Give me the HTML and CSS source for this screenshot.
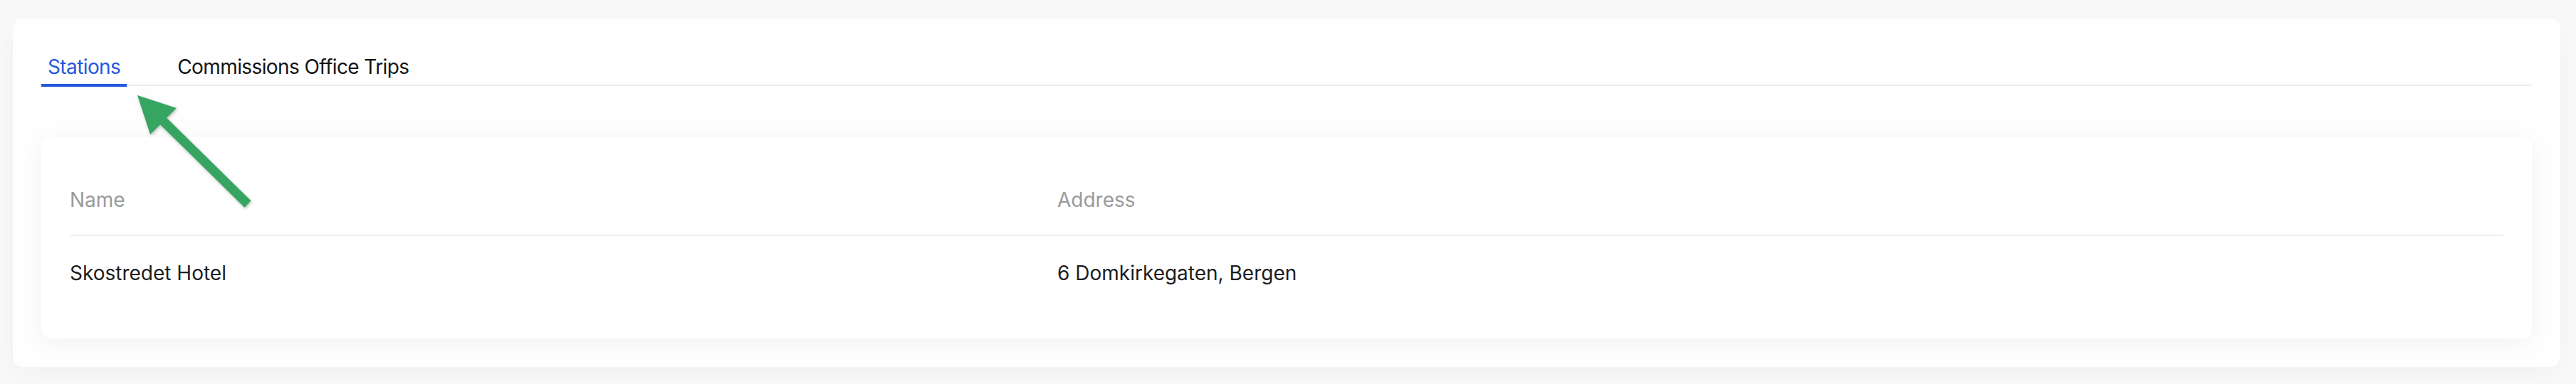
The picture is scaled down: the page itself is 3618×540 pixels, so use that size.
FILE: index.html
```html
<!DOCTYPE html>
<html lang="en">
<head>
<meta charset="utf-8">
<title>Stations</title>
<link rel="stylesheet" href="styles.css">
</head>
<body>
<div class="page">
  <section class="panel">
    <nav class="tabs">
      <div class="tab active">Stations</div>
      <div class="tab">Commissions Office Trips</div>
    </nav>
    <div class="card">
      <div class="table">
        <div class="row head">
          <div class="cell">Name</div>
          <div class="cell">Address</div>
        </div>
        <div class="row body-row">
          <div class="cell">Skostredet Hotel</div>
          <div class="cell">6 Domkirkegaten, Bergen</div>
        </div>
      </div>
    </div>
  </section>
  <svg class="arrow" width="420" height="330" viewBox="0 0 420 330" aria-hidden="true">
    <polygon points="193,134 248,152 234,165.8 352.5,282.3 343.5,291.7 225,175.2 211,189" fill="#36a561"/>
  </svg>
</div>
</body>
</html>
```
FILE: styles.css
```css
html, body {
  margin: 0;
  padding: 0;
}
body {
  background: #f9f9f9;
  font-family: Inter, "Noto Sans", "Liberation Sans", sans-serif;
  font-size: 28px;
  color: #1c1c1c;
}
.page {
  position: relative;
  padding: 26px 22px 24px 18px;
}
.panel {
  background: #fefefe;
  border-radius: 14px;
  box-shadow: 0 10px 40px rgba(0, 0, 0, 0.04);
  padding: 48px 40px 40px 40px;
  height: 402px;
}
.tabs {
  display: flex;
  gap: 62px;
  border-bottom: 2px solid #ededed;
}
.tab {
  position: relative;
  padding: 0 9px 5px 9px;
  line-height: 40px;
  letter-spacing: -0.6px;
  color: #141414;
}
.tab.active {
  color: #2559dc;
}
.tab.active::after {
  content: "";
  position: absolute;
  left: 0;
  right: 0;
  bottom: -3px;
  height: 4px;
  background: #2559dc;
}
.card {
  margin-top: 72px;
  background: #ffffff;
  border-radius: 14px;
  box-shadow: 0 6px 30px rgba(0, 0, 0, 0.05);
  padding: 40px;
}
.row {
  display: grid;
  grid-template-columns: 1387px 1fr;
  line-height: 40px;
}
.head {
  padding: 28px 0 29px 0;
  border-bottom: 2px solid #eeeeee;
  color: #9a9a9a;
}
.body-row {
  padding: 32px 0;
  color: #1d1d1d;
}
.arrow {
  position: absolute;
  left: 0;
  top: 0;
  filter: drop-shadow(1px 2px 2px rgba(0, 0, 0, 0.25));
}
```
